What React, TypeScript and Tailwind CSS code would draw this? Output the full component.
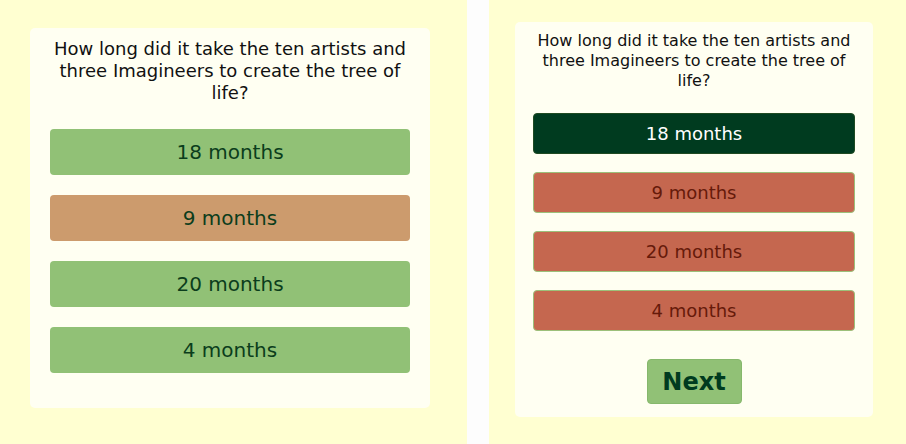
const QUESTION = "How long did it take the ten artists and three Imagineers to create the tree of life?";

const ANSWERS = ["18 months", "9 months", "20 months", "4 months"];

const font = { fontFamily: '"DejaVu Sans", Verdana, sans-serif' };

function QuizStart() {
  return (
    <div className="w-[467px] h-full bg-[#ffffd1] pt-[28px] pl-[30px]">
      <div className="w-[400px] h-[380px] bg-[#fffff2] rounded-[5px] px-[20px] pt-[10px]">
        <p className="text-[18px] leading-[22px] text-center text-[#111]">{QUESTION}</p>
        <div className="flex flex-col gap-[20px] mt-[25px]">
          {ANSWERS.map((a, i) => (
            <button
              key={a}
              className={`h-[46px] w-full rounded-[4px] text-[20px] text-[#0b3d1c] ${
                i === 1 ? "bg-[#cc9b6d]" : "bg-[#91c176]"
              }`}
            >
              {a}
            </button>
          ))}
        </div>
      </div>
    </div>
  );
}

function QuizAnswered() {
  return (
    <div className="flex-1 h-full bg-[#ffffd1] pt-[22px] pl-[26px]">
      <div className="w-[358px] h-[395px] bg-[#fffff2] rounded-[5px] px-[18px] pt-[9px] flex flex-col">
        <p className="text-[16px] leading-[20px] text-center text-[#111]">{QUESTION}</p>
        <div className="flex flex-col gap-[18px] mt-[22px]">
          {ANSWERS.map((a, i) => (
            <button
              key={a}
              className={`h-[41px] w-full rounded-[4px] border text-[18px] ${
                i === 0
                  ? "bg-[#003b1f] border-[#1f4a22] text-white"
                  : "bg-[#c5674f] border-[#9cc07a] text-[#661a0a]"
              }`}
            >
              {a}
            </button>
          ))}
        </div>
        <div className="flex justify-center mt-[28px]">
          <button className="w-[95px] h-[45px] rounded-[4px] bg-[#91c176] border border-[#86b86c] text-[24px] font-bold text-[#003b1f]">
            Next
          </button>
        </div>
      </div>
    </div>
  );
}

export default function App() {
  return (
    <div className="flex w-[906px] h-[444px] bg-[#fdfdfd] gap-[22px] overflow-hidden" style={font}>
      <QuizStart />
      <QuizAnswered />
    </div>
  );
}
